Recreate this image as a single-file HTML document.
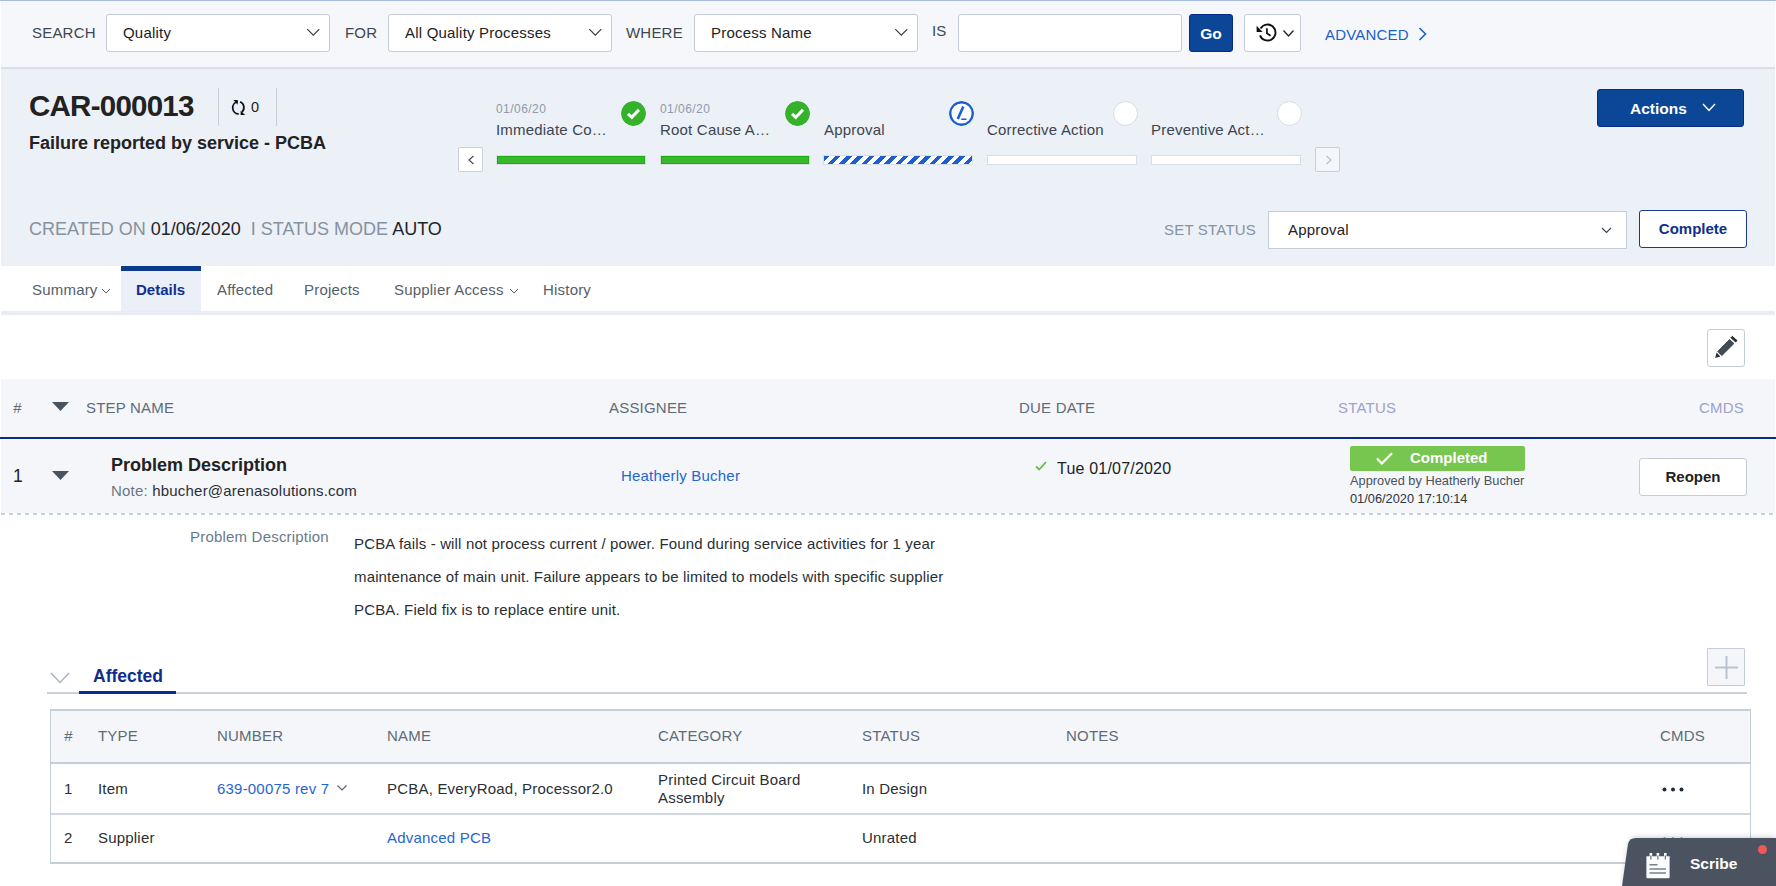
<!DOCTYPE html>
<html><head><meta charset="utf-8">
<style>
*{box-sizing:border-box;margin:0;padding:0}
html,body{width:1776px;height:886px;overflow:hidden;background:#fff;font-family:"Liberation Sans",sans-serif;color:#222;letter-spacing:0.2px}
[style*="font-weight:bold"]{letter-spacing:0}
.a{position:absolute;white-space:nowrap}
svg{display:block}
#top{position:absolute;left:0;top:0;width:1775px;height:68px;background:#f5f7fa}
#topline{position:absolute;left:0;top:0;width:1776px;height:1px;background:#a9bde0}
.lbl{position:absolute;font-size:15px;color:#3c4752;top:24px}
.sel{position:absolute;top:14px;height:38px;background:#fff;border:1px solid #c3ccd8;border-radius:3px}
.sel span{position:absolute;left:16px;top:9px;font-size:15px;color:#222}
.chev{position:absolute;width:14px;height:8px}
#hdr{position:absolute;left:0;top:68px;width:1775px;height:198px;background:#ecf0f7}
.date{position:absolute;top:102px;font-size:12px;letter-spacing:0.45px;color:#8e9aa8}
.sname{position:absolute;top:121px;font-size:15px;color:#3b4550}
.bar{position:absolute;top:155px;width:150px;height:10px;border:1px solid #d9dfe7;background-clip:padding-box!important}
.bar.g{background:#3bb72d;box-shadow:inset 0 0 0 1px #18b010}
.bar.w{background:#fff}
.bar.s{background:repeating-linear-gradient(135deg,#1e5fd0 0 4px,#fff 4px 8px)}
.circ{position:absolute;top:101px;width:25px;height:25px;border-radius:50%}
.arrowbox{position:absolute;top:147px;width:25px;height:25px;border:1px solid #c8d0db;border-radius:2px;background:#fff}
#tabs{position:absolute;left:0;top:266px;width:1775px;height:45px;background:#fff}
.tab{position:absolute;top:15px;font-size:15px;color:#55606b}
#tabline{position:absolute;left:1px;top:311px;width:1774px;height:4px;background:#e9edf3}
.th{position:absolute;font-size:15px;color:#5f6b77}
.blue{color:#1f66d1}
.btn{position:absolute;background:#fff;border:1px solid #c3ccd8;border-radius:3px}
.t2{position:absolute;font-size:15px;color:#2a2f35}
</style></head><body>
<div id="top">
  <div class="lbl" style="left:32px">SEARCH</div>
  <div class="sel" style="left:106px;width:224px"><span>Quality</span>
    <svg class="chev" style="left:199px;top:13px" viewBox="0 0 14 8"><path d="M1.3 1.2L7.3 7.2L13.3 1.2" fill="none" stroke="#2f3a44" stroke-width="1.15"/></svg></div>
  <div class="lbl" style="left:345px">FOR</div>
  <div class="sel" style="left:388px;width:224px"><span>All Quality Processes</span>
    <svg class="chev" style="left:199px;top:13px" viewBox="0 0 14 8"><path d="M1.3 1.2L7.3 7.2L13.3 1.2" fill="none" stroke="#2f3a44" stroke-width="1.15"/></svg></div>
  <div class="lbl" style="left:626px">WHERE</div>
  <div class="sel" style="left:694px;width:224px"><span>Process Name</span>
    <svg class="chev" style="left:199px;top:13px" viewBox="0 0 14 8"><path d="M1.3 1.2L7.3 7.2L13.3 1.2" fill="none" stroke="#2f3a44" stroke-width="1.15"/></svg></div>
  <div class="lbl" style="left:932px;top:22px">IS</div>
  <div class="sel" style="left:958px;width:224px"></div>
  <div class="a" style="left:1189px;top:14px;width:44px;height:38px;background:#0b4697;border:1px solid #0a2a8a;border-radius:3px;color:#fff;font-weight:bold;font-size:15.5px;text-align:center;line-height:37px">Go</div>
  <div class="sel" style="left:1244px;width:57px">
    <svg class="a" style="left:-1px;top:-1px" width="57" height="38" viewBox="1244 14 57 38"><path d="M1260.6 28.5A8 8 0 1 1 1260 35.3" fill="none" stroke="#111" stroke-width="1.9"/><path d="M1256.6 25.8V32H1262.6Z" fill="#111"/><path d="M1266.9 28.2V33.2L1270.6 35.8" fill="none" stroke="#111" stroke-width="1.7"/></svg>
    <svg class="chev" style="left:38px;top:15px;width:11px;height:7px" viewBox="0 0 11 7"><path d="M0.5 0.5L5.5 6L10.5 0.5" fill="none" stroke="#222" stroke-width="1.3"/></svg>
  </div>
  <div class="a" style="left:1325px;top:26px;font-size:15px;color:#1a5fcc">ADVANCED</div>
  <svg class="a" style="left:1418px;top:27px" width="9" height="14" viewBox="0 0 9 14"><path d="M1.5 1L7.5 7L1.5 13" fill="none" stroke="#1a5fcc" stroke-width="1.6"/></svg>
</div>
<div id="topline"></div>
<div class="a" style="left:0;top:67px;width:1775px;height:2px;background:#d8dfe8;z-index:4"></div>
<div class="a" style="left:0;top:1px;width:1px;height:436px;background:#fff;z-index:5"></div><div class="a" style="left:0;top:439px;width:1px;height:447px;background:#fff;z-index:5"></div>

<div id="hdr">
  <div class="a" style="left:29px;top:21px;font-size:29.5px;letter-spacing:-0.75px;font-weight:bold;color:#222">CAR-000013</div>
  <div class="a" style="left:218px;top:20px;width:1px;height:38px;background:#c6ced9"></div>
  <svg class="a" style="left:225px;top:27px" width="40" height="25" viewBox="224.5 95 40 25"><path d="M237.3 101.7A6.2 6.2 0 0 0 238.3 114" fill="none" stroke="#111" stroke-width="1.75"/><path d="M239.6 101.7A6.3 6.3 0 0 1 241.5 112" fill="none" stroke="#111" stroke-width="1.75"/><path d="M232.9 100.1H237.2V104.7Z" fill="#111"/><path d="M240.1 110.8V114.9H244.6Z" fill="#111"/></svg>
  <div class="a" style="left:251px;top:31px;font-size:14.5px;color:#222">0</div>
  <div class="a" style="left:276px;top:20px;width:1px;height:38px;background:#c6ced9"></div>
  <div class="a" style="left:29px;top:65px;font-size:18px;font-weight:bold;color:#222">Failure reported by service - PCBA</div>

  <div class="arrowbox" style="left:458px;top:79px"><svg class="a" style="left:9px;top:7px" width="7" height="10" viewBox="0 0 7 10"><path d="M5.5 1L1 5L5.5 9" fill="none" stroke="#3b4550" stroke-width="1.1"/></svg></div>
  <div class="arrowbox" style="left:1315px;top:79px;background:#f4f6fa"><svg class="a" style="left:9px;top:7px" width="7" height="10" viewBox="0 0 7 10"><path d="M1.5 1L6 5L1.5 9" fill="none" stroke="#b4bec9" stroke-width="1.1"/></svg></div>
</div>

<!-- steps (absolute to body) -->
<div class="date" style="left:496px">01/06/20</div>
<div class="sname" style="left:496px">Immediate Co…</div>
<div class="bar g" style="left:496px"></div>
<svg class="a circ" style="left:621px" width="25" height="25" viewBox="0 0 25 25"><circle cx="12.5" cy="12.5" r="12.5" fill="#33b22a"/><path d="M7 12.8L10.8 16.3L18 8.8" fill="none" stroke="#fff" stroke-width="3"/></svg>

<div class="date" style="left:660px">01/06/20</div>
<div class="sname" style="left:660px">Root Cause A…</div>
<div class="bar g" style="left:660px"></div>
<svg class="a circ" style="left:785px" width="25" height="25" viewBox="0 0 25 25"><circle cx="12.5" cy="12.5" r="12.5" fill="#33b22a"/><path d="M7 12.8L10.8 16.3L18 8.8" fill="none" stroke="#fff" stroke-width="3"/></svg>

<div class="sname" style="left:824px">Approval</div>
<div class="bar s" style="left:823px"></div>
<svg class="a circ" style="left:949px" width="25" height="25" viewBox="0 0 25 25"><circle cx="12.5" cy="12.5" r="11.3" fill="#fff" stroke="#1a5fd0" stroke-width="2.4"/><path d="M14.3 5.5L8.8 18" fill="none" stroke="#1a5fd0" stroke-width="2.6"/><path d="M12.2 18.2H17.5" fill="none" stroke="#1a5fd0" stroke-width="1.5"/></svg>

<div class="sname" style="left:987px">Corrective Action</div>
<div class="bar w" style="left:987px"></div>
<div class="circ" style="left:1113px;background:#fff;border:1px solid #d6dde6"></div>

<div class="sname" style="left:1151px">Preventive Act…</div>
<div class="bar w" style="left:1151px"></div>
<div class="circ" style="left:1277px;background:#fff;border:1px solid #d6dde6"></div>

<!-- actions -->
<div class="a" style="left:1597px;top:89px;width:147px;height:38px;background:#0b4697;border:1px solid #0a2a8a;border-radius:3px"></div>
<div class="a" style="left:1630px;top:100px;font-size:15.5px;font-weight:bold;color:#fff">Actions</div>
<svg class="a" style="left:1702px;top:103px" width="14" height="9" viewBox="0 0 14 9"><path d="M1 1L7 7.5L13 1" fill="none" stroke="#fff" stroke-width="1.5"/></svg>

<!-- created row -->
<div class="a" style="left:29px;top:219px;font-size:18px;letter-spacing:0;color:#8593a1">CREATED ON <span style="color:#1f2328">01/06/2020</span>&nbsp; I STATUS MODE <span style="color:#1f2328">AUTO</span></div>
<div class="a" style="left:1164px;top:221px;font-size:15px;color:#8593a1">SET STATUS</div>
<div class="a" style="left:1268px;top:211px;width:359px;height:38px;background:#fff;border:1px solid #c3ccd8"></div>
<div class="a" style="left:1288px;top:221px;font-size:15px;color:#222">Approval</div>
<svg class="a" style="left:1601px;top:227px" width="11" height="7" viewBox="0 0 11 7"><path d="M1 1L5.5 5.5L10 1" fill="none" stroke="#3c4752" stroke-width="1.2"/></svg>
<div class="a" style="left:1639px;top:210px;width:108px;height:38px;background:#fff;border:1.5px solid #1a3a8f;border-radius:3px;text-align:center;line-height:35px;font-size:15px;font-weight:bold;color:#0f2f8a">Complete</div>

<!-- tabs -->
<div id="tabs">
  <div class="tab" style="left:32px">Summary</div>
  <svg class="a" style="left:101px;top:22px" width="10" height="7" viewBox="0 0 10 7"><path d="M1 1L5 5L9 1" fill="none" stroke="#55606b" stroke-width="1"/></svg>
  <div class="a" style="left:121px;top:0;width:80px;height:45px;background:#ebeff7;border-top:5px solid #0b3a8f"></div>
  <div class="tab" style="left:136px;font-weight:bold;color:#12308f">Details</div>
  <div class="tab" style="left:217px">Affected</div>
  <div class="tab" style="left:304px">Projects</div>
  <div class="tab" style="left:394px">Supplier Access</div>
  <svg class="a" style="left:509px;top:22px" width="10" height="7" viewBox="0 0 10 7"><path d="M1 1L5 5L9 1" fill="none" stroke="#55606b" stroke-width="1"/></svg>
  <div class="tab" style="left:543px">History</div>
</div>
<div id="tabline"></div>

<!-- edit button -->
<div class="btn" style="left:1707px;top:329px;width:38px;height:38px">
  <svg class="a" style="left:-1px;top:-1px" width="38" height="38" viewBox="1707 329 38 38"><path d="M1717.8 351.4L1729.6 339.6L1733.9 343.6L1721.8 355.6Z" fill="#434c55" stroke="#1f2830" stroke-width="0.8"/><path d="M1731.6 336.9L1732.3 336.3L1737 340.6L1735.6 342L1730.9 337.6Z" fill="#1f2830" stroke="#1f2830" stroke-width="1"/><path d="M1715.2 358L1716.6 352.6L1720.4 356.6Z" fill="#2a333b"/></svg>
</div>

<!-- steps table -->
<div class="a" style="left:1px;top:379px;width:1774px;height:58px;background:#f4f6fa"></div>
<div class="th" style="left:13px;top:399px;font-style:italic">#</div>
<svg class="a" style="left:52px;top:402px" width="17" height="9" viewBox="0 0 17 9"><path d="M0 0H17L8.5 9Z" fill="#4a545e"/></svg>
<div class="th" style="left:86px;top:399px">STEP NAME</div>
<div class="th" style="left:609px;top:399px">ASSIGNEE</div>
<div class="th" style="left:1019px;top:399px">DUE DATE</div>
<div class="th" style="left:1338px;top:399px;color:#9ea3c9">STATUS</div>
<div class="th" style="left:1699px;top:399px;color:#9ea3c9">CMDS</div>
<div class="a" style="left:0;top:437px;width:1776px;height:2px;background:#0a2a8c"></div>

<div class="a" style="left:1px;top:439px;width:1774px;height:74px;background:#f4f6fa"></div><div class="a" style="left:1px;top:513px;width:1774px;height:2px;background:repeating-linear-gradient(90deg,#c8d1dc 0 4px,transparent 4px 8px)"></div>
<div class="a" style="left:13px;top:466px;font-size:17.5px;color:#222">1</div>
<svg class="a" style="left:52px;top:471px" width="17" height="9" viewBox="0 0 17 9"><path d="M0 0H17L8.5 9Z" fill="#4a545e"/></svg>
<div class="a" style="left:111px;top:455px;font-size:18px;font-weight:bold;color:#222">Problem Description</div>
<div class="a" style="left:111px;top:482px;font-size:15px;color:#2a2f35"><span style="color:#6b7682">Note:</span> hbucher@arenasolutions.com</div>
<div class="a blue" style="left:621px;top:467px;font-size:15px">Heatherly Bucher</div>
<svg class="a" style="left:1035px;top:461px" width="12" height="10" viewBox="0 0 12 10"><path d="M1 5.5L4.2 8.5L11 1" fill="none" stroke="#5cc04a" stroke-width="1.8"/></svg>
<div class="a" style="left:1057px;top:460px;font-size:16px;color:#222">Tue 01/07/2020</div>
<div class="a" style="left:1350px;top:446px;width:175px;height:25px;background:#77c64f;border-radius:2px"></div>
<svg class="a" style="left:1376px;top:452px" width="17" height="13" viewBox="0 0 17 13"><path d="M1 6.5L5.8 11.5L16 1.2" fill="none" stroke="#fff" stroke-width="2.2"/></svg>
<div class="a" style="left:1410px;top:449px;font-size:15px;font-weight:bold;color:#fff">Completed</div>
<div class="a" style="left:1350px;top:473px;font-size:12.8px;letter-spacing:0;color:#4a525a">Approved by Heatherly Bucher</div>
<div class="a" style="left:1350px;top:491px;font-size:12.8px;letter-spacing:0;color:#2f353b">01/06/2020 17:10:14</div>
<div class="btn" style="left:1639px;top:458px;width:108px;height:38px;text-align:center;line-height:36px;font-size:15px;font-weight:bold;color:#222">Reopen</div>

<!-- detail -->
<div class="a" style="left:190px;top:528px;font-size:15px;color:#6b7a8a">Problem Description</div>
<div class="a" style="left:354px;top:527px;letter-spacing:0.15px;font-size:15px;line-height:33px;color:#2a2e33;white-space:normal;width:620px">PCBA fails - will not process current / power. Found during service activities for 1 year<br>maintenance of main unit. Failure appears to be limited to models with specific supplier<br>PCBA. Field fix is to replace entire unit.</div>

<!-- affected section -->
<svg class="a" style="left:50px;top:672px" width="20" height="12" viewBox="0 0 20 12"><path d="M1 1L10 10.5L19 1" fill="none" stroke="#a9b4c2" stroke-width="1.5"/></svg>
<div class="a" style="left:93px;top:666px;font-size:17.5px;font-weight:bold;color:#0f2d8c">Affected</div>
<div class="a" style="left:47px;top:692px;width:1700px;height:2px;background:#c9d2dc"></div>
<div class="a" style="left:79px;top:691px;width:97px;height:3px;background:#0a2a8c"></div>
<div class="btn" style="left:1707px;top:648px;width:38px;height:38px;background:#f4f6fa;border-radius:1px">
  <svg class="a" style="left:7px;top:7px" width="23" height="23" viewBox="0 0 23 23"><path d="M11.5 0V23M0 11.5H23" stroke="#b8c4d0" stroke-width="2"/></svg>
</div>

<div class="a" style="left:50px;top:709px;width:1701px;height:155px;border:1px solid #c5cfda;border-top-width:2px;border-bottom-width:2px"></div>
<div class="a" style="left:51px;top:711px;width:1699px;height:51px;background:#f4f6fa"></div>
<div class="a" style="left:51px;top:762px;width:1699px;height:2px;background:#c5cfda"></div>
<div class="a" style="left:51px;top:813px;width:1699px;height:1.5px;background:#cfd7e0"></div>
<div class="th" style="left:64px;top:727px;font-style:italic">#</div>
<div class="th" style="left:98px;top:727px">TYPE</div>
<div class="th" style="left:217px;top:727px">NUMBER</div>
<div class="th" style="left:387px;top:727px">NAME</div>
<div class="th" style="left:658px;top:727px">CATEGORY</div>
<div class="th" style="left:862px;top:727px">STATUS</div>
<div class="th" style="left:1066px;top:727px">NOTES</div>
<div class="th" style="left:1660px;top:727px">CMDS</div>

<div class="t2" style="left:64px;top:780px">1</div>
<div class="t2" style="left:98px;top:780px">Item</div>
<div class="t2 blue" style="left:217px;top:780px;color:#1f66d1">639-00075 rev 7</div>
<svg class="a" style="left:337px;top:785px" width="10" height="6" viewBox="0 0 10 6"><path d="M0.5 0.5L5 5L9.5 0.5" fill="none" stroke="#55606b" stroke-width="1.1"/></svg>
<div class="t2" style="left:387px;top:780px">PCBA, EveryRoad, Processor2.0</div>
<div class="t2" style="left:658px;top:771px;line-height:18px">Printed Circuit Board<br>Assembly</div>
<div class="t2" style="left:862px;top:780px">In Design</div>
<svg class="a" style="left:1662px;top:787px" width="23" height="5" viewBox="0 0 23 5"><circle cx="2.5" cy="2.5" r="2" fill="#1f2a38"/><circle cx="11" cy="2.5" r="2" fill="#1f2a38"/><circle cx="19.5" cy="2.5" r="2" fill="#1f2a38"/></svg>

<div class="t2" style="left:64px;top:829px">2</div>
<div class="t2" style="left:98px;top:829px">Supplier</div>
<div class="t2" style="left:387px;top:829px;color:#1f66d1">Advanced PCB</div>
<div class="t2" style="left:862px;top:829px">Unrated</div>
<svg class="a" style="left:1662px;top:837px" width="23" height="5" viewBox="0 0 23 5"><circle cx="2.5" cy="2.5" r="2" fill="#1f2a38"/><circle cx="11" cy="2.5" r="2" fill="#1f2a38"/><circle cx="19.5" cy="2.5" r="2" fill="#1f2a38"/></svg>

<!-- scribe -->
<svg class="a" style="left:1612px;top:828px" width="164" height="58" viewBox="0 0 164 58"><defs><filter id="sh" x="-20%" y="-40%" width="140%" height="180%"><feGaussianBlur stdDeviation="3"/></filter></defs><path d="M12 58L17 18Q18 10 26 10H164V58Z" fill="#000" opacity="0.25" filter="url(#sh)"/><path d="M10 58L16 16Q17 10 24 10H164V58Z" fill="#4b5361"/></svg>
<svg class="a" style="left:1640px;top:848px" width="36" height="38" viewBox="1640 848 36 38"><path d="M1646.4 856.3H1669.6V877.3Q1669.6 878.3 1668.6 878.3H1647.4Q1646.4 878.3 1646.4 877.3Z" fill="#fafbfc"/><path d="M1649.6 853H1652.2V857.8H1649.6ZM1656.6 853H1659.2V857.8H1656.6ZM1664 853H1666.6V857.8H1664Z" fill="#fafbfc"/><path d="M1650.9 855.5V859.5M1657.9 855.5V859.5M1665.3 855.5V859.5" stroke="#3a414c" stroke-width="0.9"/><path d="M1649.5 864.7H1657.5M1649.5 869H1666M1649.5 873H1666" stroke="#7b818b" stroke-width="1.5"/></svg>
<div class="a" style="left:1690px;top:855px;font-size:15.5px;font-weight:bold;color:#fff">Scribe</div>
<div class="a" style="left:1758px;top:845px;width:9px;height:9px;border-radius:50%;background:#f25757"></div>

</body></html>
